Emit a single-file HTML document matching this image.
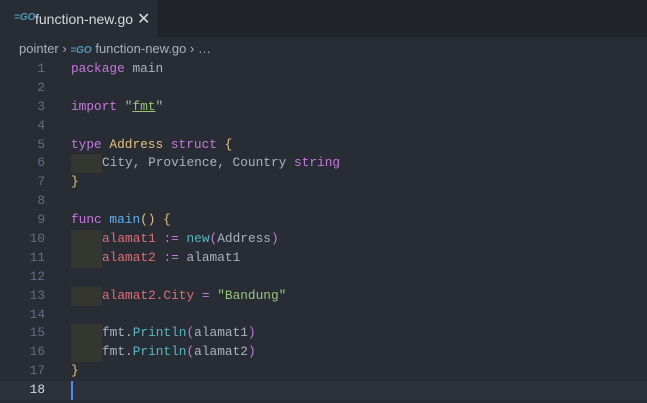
<!DOCTYPE html>
<html><head><style>
body{margin:0;width:647px;height:403px;background:#282c34;overflow:hidden;font-family:"Liberation Sans",sans-serif;position:relative}
.bar{position:absolute;left:0;top:0;width:647px;height:37px;background:#21252b}
.tab{position:absolute;left:0;top:0;width:157px;height:37px;background:#282c34;color:#d7dae0;font-size:14px}
.go{color:#519aba;font-weight:bold;font-style:italic;font-size:10px}
.crumb{position:absolute;left:19px;top:41px;color:#a9b0bd;font-size:13px}
.code{position:absolute;left:0;top:60px;font-family:"Liberation Mono",monospace;font-size:12.8px;line-height:18.9px;color:#abb2bf;white-space:pre}
.code>div{height:18.9px}
.ln{display:inline-block;width:45px;text-align:right;color:#636d83;margin-right:26px}
.cur{background:#2c313a;width:647px}
.cur .ln{color:#d7dae0}
.k{color:#c678dd}.y{color:#e5c07b}.r{color:#e06c75}.b{color:#61afef}.c{color:#56b6c2}.g{color:#98c379}
.ind{display:inline-block;width:31px;height:18.9px;vertical-align:top;background:#34372f}
</style></head><body>
<div class="bar"></div>
<div class="tab"><span style="position:absolute;left:14px;top:12px" class="go">=GO</span><span style="position:absolute;left:35px;top:11px">function-new.go</span><span style="position:absolute;left:137px;top:9px;font-size:16px">✕</span></div>
<div class="crumb">pointer › <span class="go">=GO</span> function-new.go › …</div>
<div class="code"><div><span class="ln">1</span><span class="k">package</span> main</div><div><span class="ln">2</span></div><div><span class="ln">3</span><span class="k">import</span> "<span class="g" style="text-decoration:underline">fmt</span>"</div><div><span class="ln">4</span></div><div><span class="ln">5</span><span class="k">type</span> <span class="y">Address</span> <span class="k">struct</span> <span class="y">{</span></div><div><span class="ln">6</span><span class="ind"></span>City, Provience, Country <span class="k">string</span></div><div><span class="ln">7</span><span class="y">}</span></div><div><span class="ln">8</span></div><div><span class="ln">9</span><span class="k">func</span> <span class="b">main</span><span class="y">()</span> <span class="y">{</span></div><div><span class="ln">10</span><span class="ind"></span><span class="r">alamat1</span> <span class="k">:=</span> <span class="c">new</span><span class="k">(</span>Address<span class="k">)</span></div><div><span class="ln">11</span><span class="ind"></span><span class="r">alamat2</span> <span class="k">:=</span> alamat1</div><div><span class="ln">12</span></div><div><span class="ln">13</span><span class="ind"></span><span class="r">alamat2.City</span> <span class="k">=</span> <span class="g">"Bandung"</span></div><div><span class="ln">14</span></div><div><span class="ln">15</span><span class="ind"></span>fmt.<span class="c">Println</span><span class="k">(</span>alamat1<span class="k">)</span></div><div><span class="ln">16</span><span class="ind"></span>fmt.<span class="c">Println</span><span class="k">(</span>alamat2<span class="k">)</span></div><div><span class="ln">17</span><span class="y">}</span></div><div class="cur"><span class="ln">18</span><span style="display:inline-block;width:2px;height:18.9px;vertical-align:top;background:#528bff"></span></div></div>
</body></html>
